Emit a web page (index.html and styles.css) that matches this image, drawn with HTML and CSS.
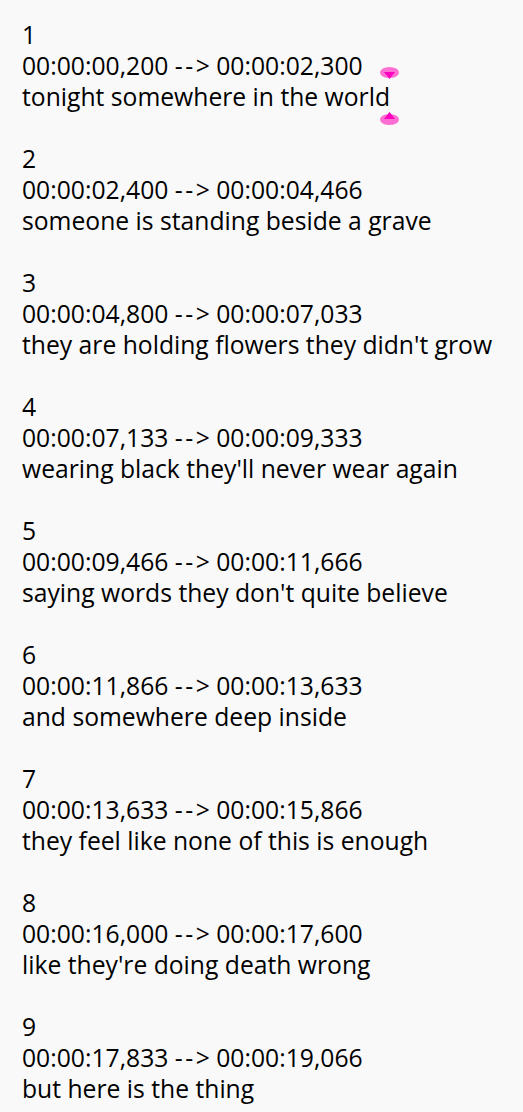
FILE: index.html
```html
<!DOCTYPE html>
<html>
<head>
<meta charset="utf-8">
<link rel="stylesheet" href="styles.css">
</head>
<body>
<main class="srt">
  <div class="cue">
    <div>1</div>
    <div>00:00:00,200 <span class="arrow">--&gt;</span> 00:00:02,300</div>
    <div>tonight somewhere in the world</div>
    <span class="handle top"></span>
    <span class="handle bottom"></span>
  </div>
  <div class="cue">
    <div>2</div>
    <div>00:00:02,400 <span class="arrow">--&gt;</span> 00:00:04,466</div>
    <div>someone is standing beside a grave</div>
  </div>
  <div class="cue">
    <div>3</div>
    <div>00:00:04,800 <span class="arrow">--&gt;</span> 00:00:07,033</div>
    <div>they are holding flowers they didn't grow</div>
  </div>
  <div class="cue">
    <div>4</div>
    <div>00:00:07,133 <span class="arrow">--&gt;</span> 00:00:09,333</div>
    <div>wearing black they'll never wear again</div>
  </div>
  <div class="cue">
    <div>5</div>
    <div>00:00:09,466 <span class="arrow">--&gt;</span> 00:00:11,666</div>
    <div>saying words they don't quite believe</div>
  </div>
  <div class="cue">
    <div>6</div>
    <div>00:00:11,866 <span class="arrow">--&gt;</span> 00:00:13,633</div>
    <div>and somewhere deep inside</div>
  </div>
  <div class="cue">
    <div>7</div>
    <div>00:00:13,633 <span class="arrow">--&gt;</span> 00:00:15,866</div>
    <div>they feel like none of this is enough</div>
  </div>
  <div class="cue">
    <div>8</div>
    <div>00:00:16,000 <span class="arrow">--&gt;</span> 00:00:17,600</div>
    <div>like they're doing death wrong</div>
  </div>
  <div class="cue">
    <div>9</div>
    <div>00:00:17,833 <span class="arrow">--&gt;</span> 00:00:19,066</div>
    <div>but here is the thing</div>
  </div>
</main>
</body>
</html>
```
FILE: styles.css
```css
html, body {
  margin: 0;
  padding: 0;
  background: #f9f9f9;
}
.srt {
  padding: 19px 0 0 22px;
  font-family: "Open Sans", sans-serif;
  font-size: 24.7px;
  line-height: 31px;
  color: #000;
  display: flex;
  flex-direction: column;
  gap: 31px;
}
.cue {
  position: relative;
}
.arrow {
  letter-spacing: 2.5px;
  margin-right: -2.5px;
}
.handle {
  position: absolute;
  width: 19px;
  height: 12px;
  left: 358px;
}
.handle::before {
  content: "";
  position: absolute;
  left: 0;
  right: 0;
  height: 11px;
  background: #ff6ed2;
  border-radius: 50%;
}
.handle::after {
  content: "";
  position: absolute;
  left: 4px;
  width: 11px;
  height: 7px;
  background: #ff00c0;
}
.handle.top { top: 48px; }
.handle.top::after { bottom: 0; clip-path: polygon(0 0, 100% 0, 50% 100%); }
.handle.bottom { top: 93px; height: 13px; }
.handle.bottom::before { bottom: 0; }
.handle.bottom::after { top: 0; clip-path: polygon(50% 0, 100% 100%, 0 100%); }
```
